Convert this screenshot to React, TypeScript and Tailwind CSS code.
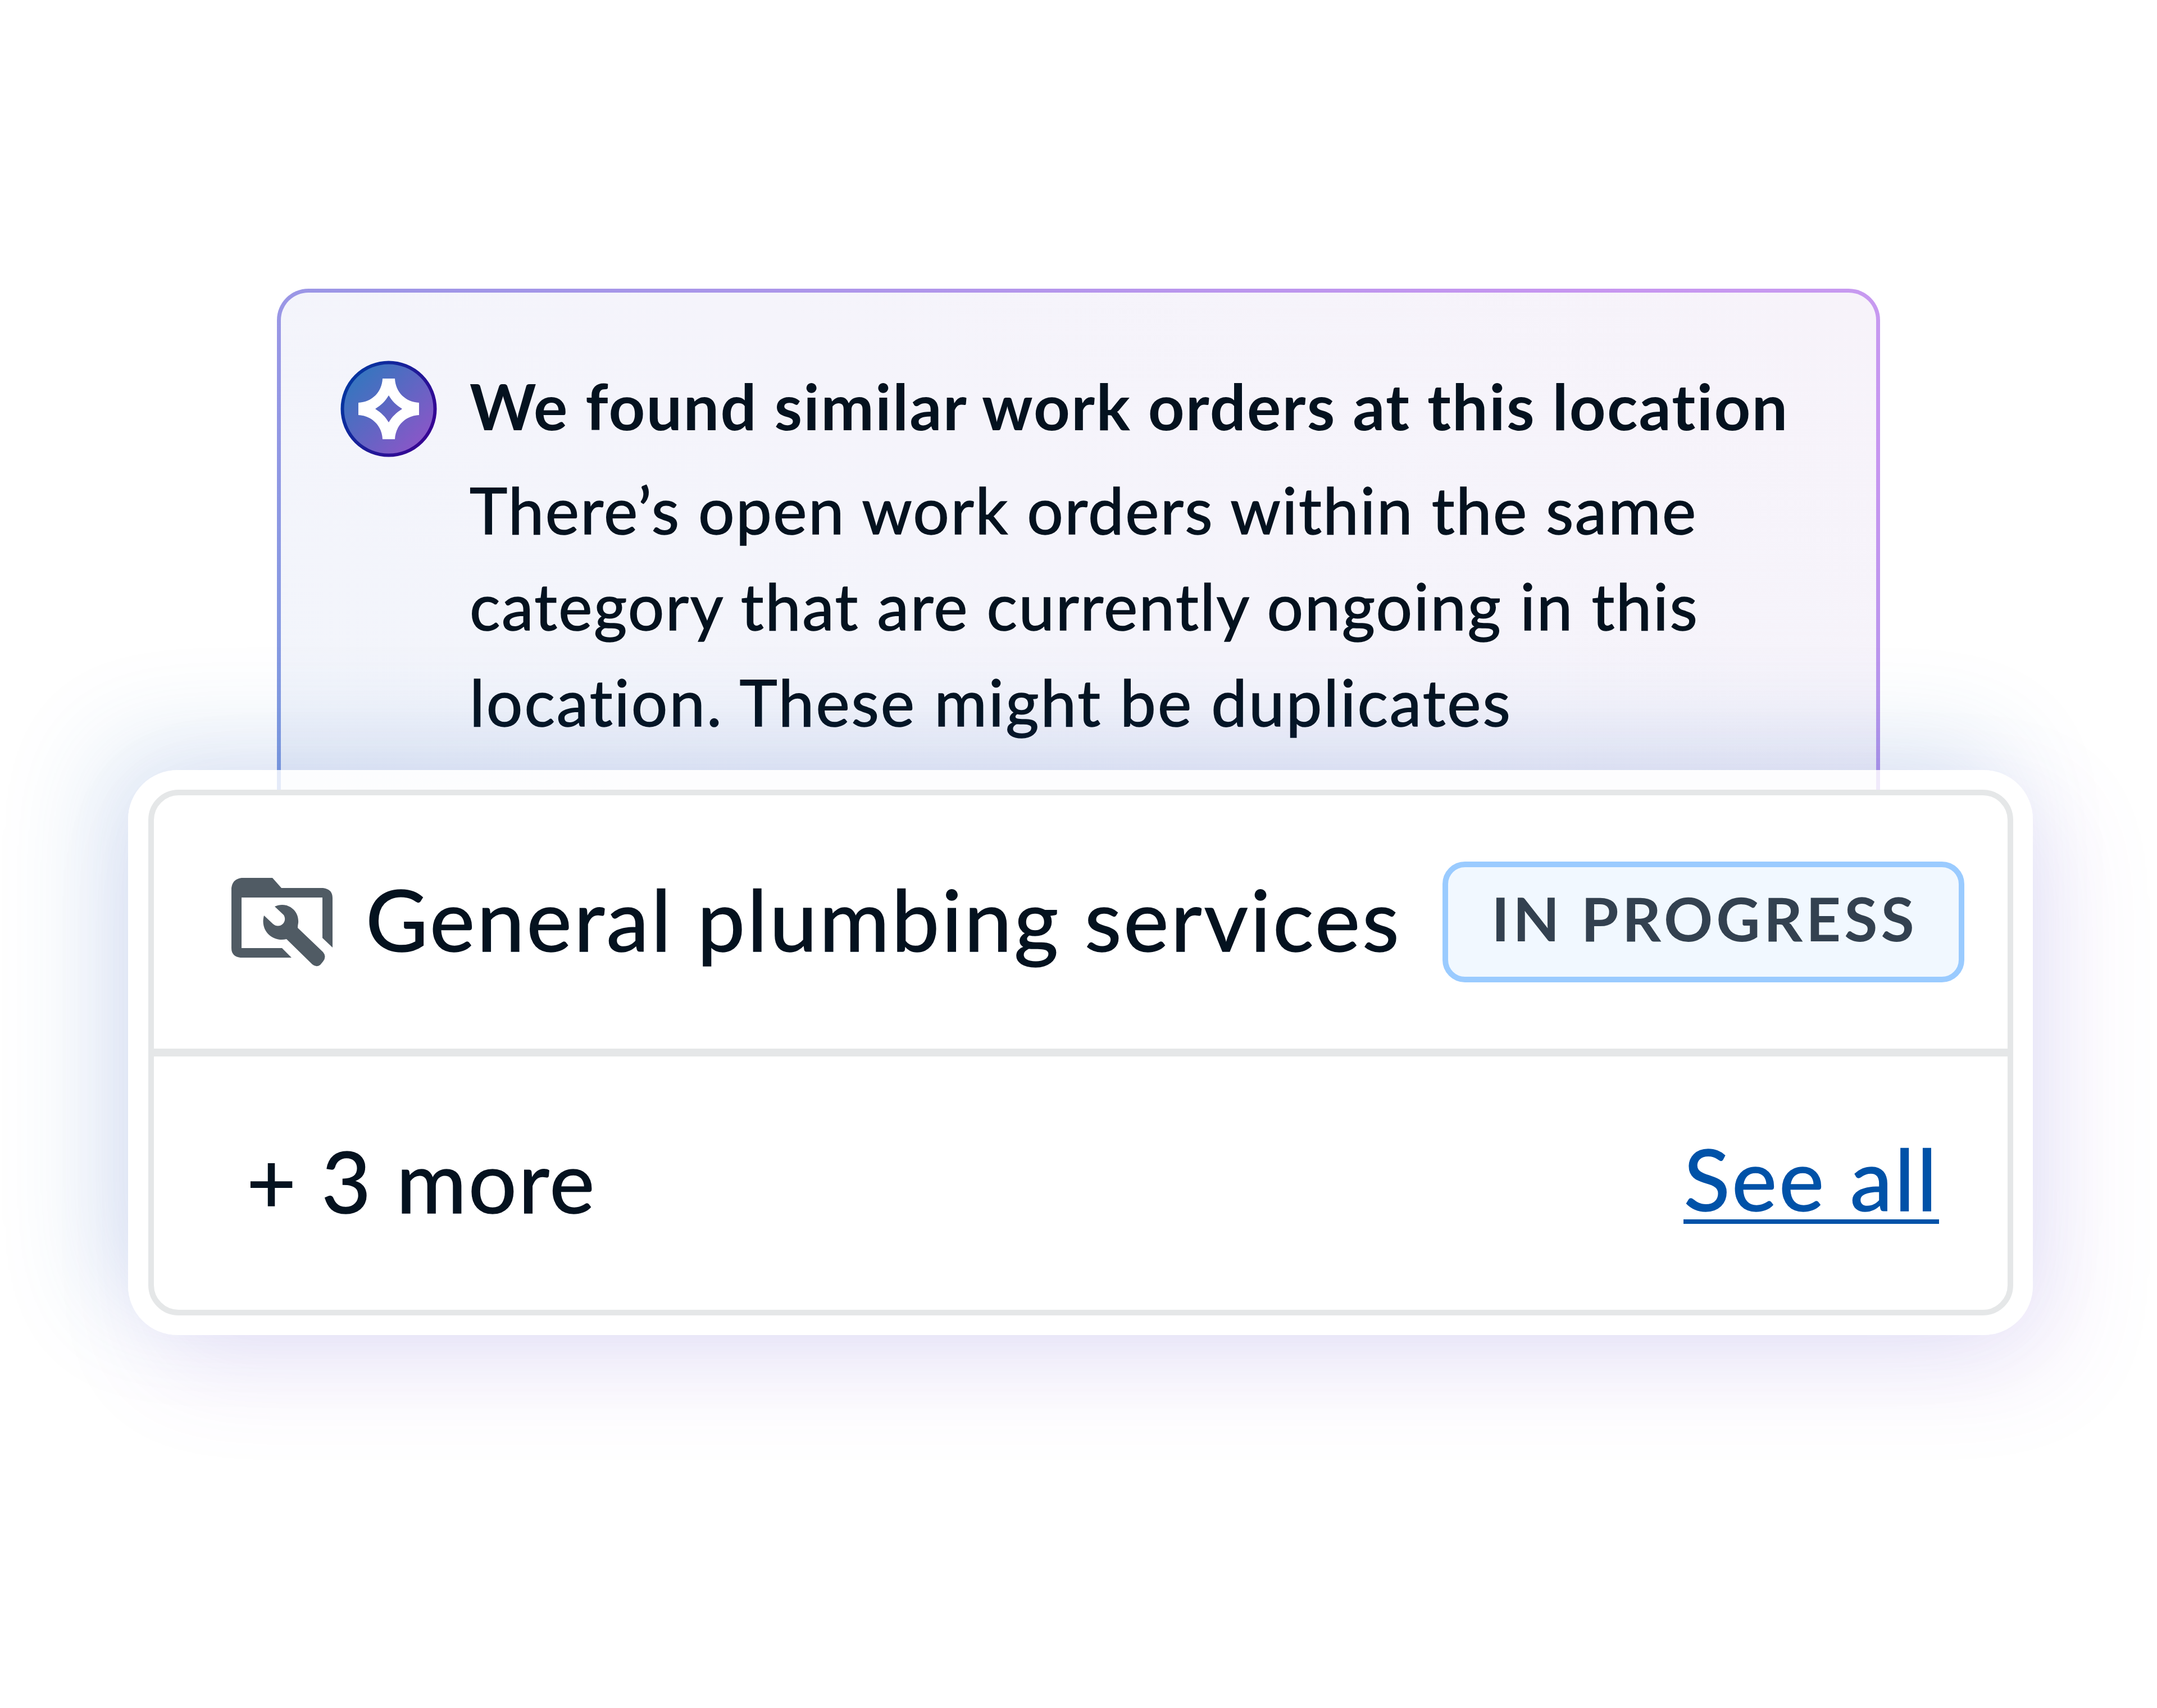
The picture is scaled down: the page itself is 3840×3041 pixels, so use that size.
import React from "react";

function SparkleBadge() {
  return (
    <svg className="size-[172px] shrink-0" viewBox="0 0 172 172">
      <defs>
        <linearGradient id="fill" x1="0.1" y1="0.1" x2="0.9" y2="0.9">
          <stop offset="0" stopColor="#3177be" />
          <stop offset="1" stopColor="#8e55c8" />
        </linearGradient>
        <linearGradient id="ring" x1="0" y1="0.2" x2="1" y2="0.8">
          <stop offset="0" stopColor="#0038a0" />
          <stop offset="1" stopColor="#3a0092" />
        </linearGradient>
      </defs>
      <circle cx="86" cy="86" r="82.5" fill="url(#fill)" stroke="url(#ring)" strokeWidth="6" />
      <path
        fillRule="evenodd"
        fill="#fff"
        d="M75 32H97C98 56 116 74 140 75V97C116 98 98 116 97 140H75C74 116 56 98 32 97V75C56 74 74 56 75 32ZM86 62C80 72 73 79 62 86C73 93 80 100 86 110C92 100 99 93 110 86C99 79 92 72 86 62Z"
      />
    </svg>
  );
}

function FolderWrenchIcon() {
  return (
    <svg className="h-[160px] w-[184px] shrink-0" viewBox="0 -1 184 160" fill="#505b64">
      <path
        fillRule="evenodd"
        d="M18 0H73L89 18H163Q180 20 180 36V124L162 107V35H18V125H90L107 142H16Q0 140 0 125V18Q2 2 18 0Z"
      />
      <path d="M77 51C98 41 121 57 119 80Q118 85 118 89L163 132Q170 140 163 149L158 155Q151 160 144 154L98 109C76 115 50 96 58 67L74 82C85 92 101 79 93 66Z" />
    </svg>
  );
}

export default function App() {
  return (
    <div className="flex h-[3041px] w-[3840px] flex-col overflow-hidden bg-white font-[Lato,sans-serif] text-[#04121f]">
      <section className="relative mt-[514px] ml-[493px] h-[892px] w-[2854px] rounded-t-[56px] bg-[linear-gradient(30deg,#7d9be0,#9d96e6_38%,#c796f0_88%,#c79af0)] p-[7px] pb-0">
        <div className="flex h-full gap-[58px] rounded-t-[49px] bg-[linear-gradient(35deg,#f2f5fb,#f5f4fb_50%,#f7f3fa)] pt-[121px] pl-[106px]">
          <SparkleBadge />
          <div className="pt-[20px]">
            <h1 className="text-[113px] leading-[120px] font-bold tracking-[2.2px] whitespace-nowrap">We found similar work orders at this location</h1>
            <p className="mt-[39px] text-[114px] leading-[171px] whitespace-nowrap [-webkit-text-stroke:1.5px_#04121f]">
              <span className="block tracking-[2.4px]">There’s open work orders within the same</span>
              <span className="block tracking-[2.45px]">category that are currently ongoing in this</span>
              <span className="block tracking-[2.95px]">location. These might be duplicates</span>
            </p>
          </div>
        </div>
      </section>
      <section className="relative z-10 mt-[-35px] ml-[228px] w-[3391px] rounded-[88px] bg-white/80 p-[35px] pl-[36px] shadow-[-50px_-45px_180px_rgba(50,115,190,0.17),45px_60px_180px_rgba(140,85,215,0.13)]">
        <div className="h-[936px] rounded-[54px] border-[10px] border-[#e5e7e8] bg-white">
          <div className="flex h-[465px] items-center border-b-[14px] border-[#e5e7e8] pl-[138px]">
            <FolderWrenchIcon />
            <span className="ml-[55px] w-[1917px] pb-[14px] text-[152px] leading-[200px] tracking-[3.8px] whitespace-nowrap [-webkit-text-stroke:1.5px_#04121f]">General plumbing services</span>
            <span className="flex h-[215px] w-[929px] items-center justify-center rounded-[40px] border-[10px] border-[#9acbff] bg-[#f1f8ff] pb-[16px] pl-[4px] text-[108px] leading-none font-bold tracking-[6px] text-[#334150]">IN PROGRESS</span>
          </div>
          <div className="flex h-[451px] items-center justify-between pr-[122px] pb-[12px] pl-[165px] text-[152px] leading-[200px]">
            <span className="tracking-[3.1px] [-webkit-text-stroke:1.5px_#04121f]">+ 3 more</span>
            <a className="border-b-[8px] border-[#0052a8] leading-[148px] tracking-[3.7px] text-[#0052a8] [-webkit-text-stroke:1.5px_#0052a8]">See all</a>
          </div>
        </div>
      </section>
    </div>
  );
}
